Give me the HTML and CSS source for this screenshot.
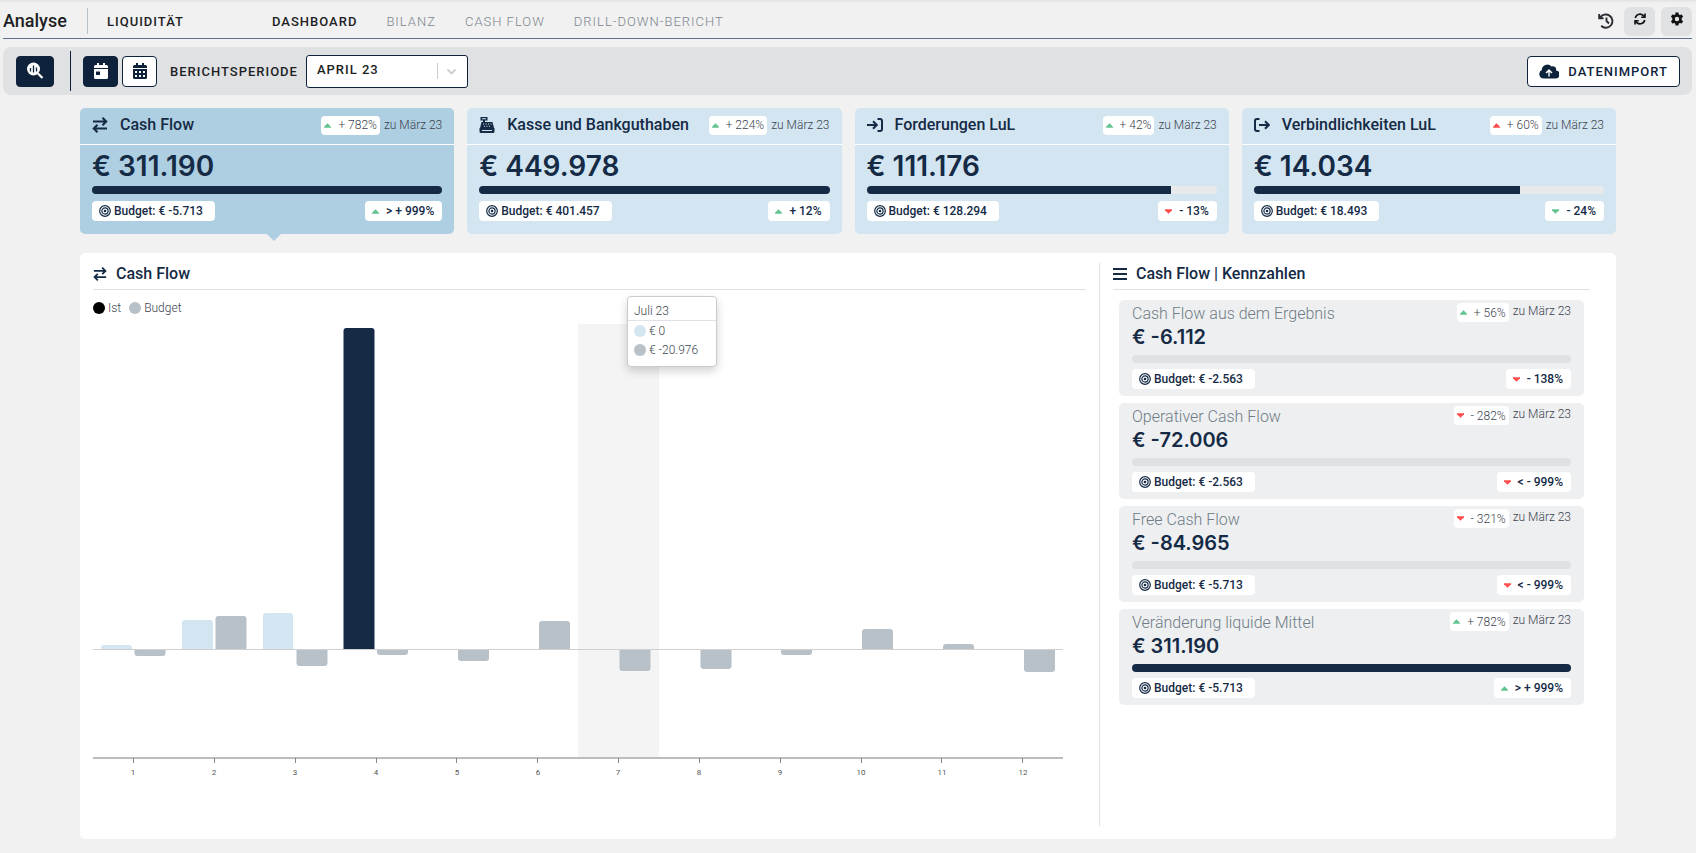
FILE: index.html
```html
<!DOCTYPE html>
<html lang="de">
<head>
<meta charset="utf-8">
<meta name="viewport" content="width=device-width, initial-scale=1">
<title>Analyse – Liquidität</title>
<link rel="stylesheet" href="styles.css">
</head>
<body>
<svg class="sprite" aria-hidden="true">
  <symbol id="swap" viewBox="0 0 16 16"><path d="M1 4.500h13M10.500 .800l3.700 3.700L10.500 8.200M15 11.500H2M5.500 7.800L1.800 11.500 5.500 15.200" fill="none" stroke="currentColor" stroke-width="2.100"/></symbol>
  <symbol id="register" viewBox="0 0 16 16"><path fill="currentColor" fill-rule="evenodd" d="M1.500 0h7v3.500H6V5h7.500l1.500 6H1l1.500-6H4V3.500H1.500zM3 1.300v1h4v-1zM4 6.500v1h1v-1zm2.500 0v1h1v-1zm2.500 0v1h1v-1zm2.500 0v1h1v-1zM5 8.700v1h1v-1zm2.500 0v1h1v-1zm2.500 0v1h1v-1zM.500 11h15v3.500q0 1.500-1.500 1.500H2Q.500 16 .500 14.500zM3 13v1h10v-1z"/></symbol>
  <symbol id="enter" viewBox="0 0 16 16"><path d="M0 8h9.500M6 4.200L9.800 8 6 11.800M10.500 2H13q2 0 2 2v8q0 2-2 2h-2.500" fill="none" stroke="currentColor" stroke-width="2"/></symbol>
  <symbol id="leave" viewBox="0 0 16 16"><path d="M5 8h9.500M11 4.200L14.800 8 11 11.800M5.500 2H3Q1 2 1 4v8q0 2 2 2h2.500" fill="none" stroke="currentColor" stroke-width="2"/></symbol>
  <symbol id="target" viewBox="0 0 12 12"><g fill="none" stroke="currentColor" stroke-width="1.200"><circle cx="6" cy="6" r="5.300"/><circle cx="6" cy="6" r="3.100"/></g><circle cx="6" cy="6" r="1.300" fill="currentColor"/></symbol>
  <symbol id="up" viewBox="0 0 8 5"><path d="M4 0l4 4v1H0V4z" fill="currentColor"/></symbol>
  <symbol id="down" viewBox="0 0 8 5"><path d="M4 5l4-4V0H0v1z" fill="currentColor"/></symbol>
  <symbol id="list" viewBox="0 0 14 14"><path d="M0 2h14M0 7h14M0 12h14" stroke="currentColor" stroke-width="2"/></symbol>
</svg>

<header class="topbar">
  <h1 class="brand">Analyse</h1>
  <span class="area">Liquidität</span>
  <nav class="tabs">
    <a class="tab tab-active" href="#dashboard">Dashboard</a>
    <a class="tab" href="#bilanz">Bilanz</a>
    <a class="tab" href="#cashflow">Cash Flow</a>
    <a class="tab" href="#bericht">Drill-Down-Bericht</a>
  </nav>
  <div class="tools">
    <button class="tool tool-plain" type="button" aria-label="Verlauf"><svg width="16" height="16" viewBox="0 0 16 16"><path d="M1.200 1v4.300h4.300M2 5a6.600 6.600 0 1 1 1.200 7.800M8.500 4.500V8l2.500 2.500" fill="none" stroke="currentColor" stroke-width="1.900"/></svg></button>
    <button class="tool" type="button" aria-label="Aktualisieren"><svg width="12" height="12" viewBox="0 0 12 12"><path d="M1.300 5A4.800 4.800 0 0 1 10 3.300M10.700 7A4.800 4.800 0 0 1 2 8.700M11 .500V4.200H7.300M1 11.500V7.800h3.700" fill="none" stroke="currentColor" stroke-width="1.600"/></svg></button>
    <button class="tool" type="button" aria-label="Einstellungen"><svg width="14" height="14" viewBox="0 0 14 14"><path fill="currentColor" fill-rule="evenodd" d="M5.600.500h2.800l.400 1.900 1.100.600 1.800-.600 1.400 2.400-1.400 1.300v1.800l1.400 1.300-1.400 2.400-1.800-.600-1.100.600-.400 1.900H5.600l-.400-1.900-1.100-.600-1.800.600L.900 9.200l1.400-1.300V6.100L.900 4.800l1.400-2.400 1.800.600 1.100-.600zM7 4.800a2.200 2.200 0 1 0 0 4.400 2.200 2.200 0 0 0 0-4.400z"/></svg></button>
  </div>
</header>

<section class="toolbar">
  <button class="btn btn-dark btn-wide" type="button" aria-label="Analyse suchen"><svg width="18" height="18" viewBox="0 0 18 18"><circle cx="7.500" cy="7" r="6.500" fill="currentColor"/><path d="M12 11.500l4.500 4.500" stroke="currentColor" stroke-width="2.200"/><path d="M4.500 6v3.500M7.500 3.500v7M10.500 5.500v4" stroke="#0f223b" stroke-width="1.300"/></svg></button>
  <div class="period">
    <button class="btn btn-dark" type="button" aria-label="Monat"><svg width="14" height="16" viewBox="0 0 14 16"><path fill="currentColor" fill-rule="evenodd" d="M3 0h2v2h4V0h2v2h1.500Q14 2 14 3.500V5H0V3.500Q0 2 1.500 2H3zM0 6h14v8.500q0 1.500-1.500 1.500h-11Q0 16 0 14.500zm2 2.500v3.500h4V8.500z"/></svg></button>
    <button class="btn" type="button" aria-label="Jahr"><svg width="14" height="16" viewBox="0 0 14 16"><path fill="currentColor" fill-rule="evenodd" d="M3 0h2v2h4V0h2v2h1.500Q14 2 14 3.500V5H0V3.500Q0 2 1.500 2H3zM0 6h14v8.500q0 1.500-1.500 1.500h-11Q0 16 0 14.500zm2 2v2h2V8zm4 0v2h2V8zm4 0v2h2V8zm-8 4v2h2v-2zm4 0v2h2v-2zm4 0v2h2v-2z"/></svg></button>
    <label class="period-label" for="period">Berichtsperiode</label>
    <span class="select-box">
      <select class="select" id="period"><option>April 23</option></select>
      <svg class="select-mark" width="24" height="16" viewBox="0 0 24 16"><path d="M.500 0v16" stroke="#ccc"/><path d="M10.500 6.500L14.500 10.500 18.500 6.500" fill="none" stroke="#ccc" stroke-width="1.800"/></svg>
    </span>
  </div>
  <button class="btn import" type="button"><svg width="20" height="15" viewBox="0 0 20 15"><path fill="currentColor" fill-rule="evenodd" d="M4.500 14.500A4.500 4.500 0 0 1 2.800 6 5.500 5.500 0 0 1 12.500 2.500 3.300 3.300 0 0 1 17 6.500a4 4 0 0 1-1 8zM10 5L6.500 8.500l1 1L9.300 8v4.500h1.400V8l1.800 1.500 1-1z"/></svg>Datenimport</button>
</section>

<main class="main">
  <section class="cards">
    <article class="card card-active">
      <header class="card-head"><svg class="icon"><use href="#swap"/></svg><h2 class="title">Cash Flow</h2><span class="pill trend"><svg class="arrow good"><use href="#up"/></svg>+ 782%</span><span class="since">zu März 23</span></header>
      <div class="card-body">
        <p class="amount">€ 311.190</p>
        <div class="bar"><div class="fill" style="width:100%"></div></div>
        <div class="row"><span class="pill budget"><svg class="target"><use href="#target"/></svg>Budget: € -5.713</span><span class="pill delta"><svg class="arrow good"><use href="#up"/></svg>&gt; + 999%</span></div>
      </div>
    </article>
    <article class="card">
      <header class="card-head"><svg class="icon"><use href="#register"/></svg><h2 class="title">Kasse und Bankguthaben</h2><span class="pill trend"><svg class="arrow good"><use href="#up"/></svg>+ 224%</span><span class="since">zu März 23</span></header>
      <div class="card-body">
        <p class="amount">€ 449.978</p>
        <div class="bar"><div class="fill" style="width:100%"></div></div>
        <div class="row"><span class="pill budget"><svg class="target"><use href="#target"/></svg>Budget: € 401.457</span><span class="pill delta"><svg class="arrow good"><use href="#up"/></svg>+ 12%</span></div>
      </div>
    </article>
    <article class="card">
      <header class="card-head"><svg class="icon"><use href="#enter"/></svg><h2 class="title">Forderungen LuL</h2><span class="pill trend"><svg class="arrow good"><use href="#up"/></svg>+ 42%</span><span class="since">zu März 23</span></header>
      <div class="card-body">
        <p class="amount">€ 111.176</p>
        <div class="bar"><div class="fill" style="width:87%"></div></div>
        <div class="row"><span class="pill budget"><svg class="target"><use href="#target"/></svg>Budget: € 128.294</span><span class="pill delta"><svg class="arrow bad"><use href="#down"/></svg>- 13%</span></div>
      </div>
    </article>
    <article class="card">
      <header class="card-head"><svg class="icon"><use href="#leave"/></svg><h2 class="title">Verbindlichkeiten LuL</h2><span class="pill trend"><svg class="arrow bad"><use href="#up"/></svg>+ 60%</span><span class="since">zu März 23</span></header>
      <div class="card-body">
        <p class="amount">€ 14.034</p>
        <div class="bar"><div class="fill" style="width:76%"></div></div>
        <div class="row"><span class="pill budget"><svg class="target"><use href="#target"/></svg>Budget: € 18.493</span><span class="pill delta"><svg class="arrow good"><use href="#down"/></svg>- 24%</span></div>
      </div>
    </article>
  </section>

  <section class="panel">
    <div class="chart-col">
      <header class="panel-head"><svg class="icon-small"><use href="#swap"/></svg><h2 class="title">Cash Flow</h2></header>
      <div class="legend"><span class="key"><i class="dot dot-black"></i>Ist</span><span class="key"><i class="dot dot-gray"></i>Budget</span></div>
      <div class="chart">
        <svg class="plot" viewBox="0 0 970 456" role="img" aria-label="Cash Flow je Monat, Ist und Budget">
          <rect x="485" y="0" width="81" height="433" fill="#f4f4f4"/>
          <g fill="#d3e5f1">
            <path d="M8 325v-1q0-3 3-3h25q3 0 3 3v1z"/>
            <path d="M89 325v-26q0-3 3-3h25q3 0 3 3v26z"/>
            <path d="M170 325v-33q0-3 3-3h24q3 0 3 3v33z"/>
          </g>
          <path d="M250.500 325V7q0-3 3-3h25q3 0 3 3v318z" fill="#142a45"/>
          <g fill="#b8c0c8">
            <path d="M41.500 325v4q0 3 3 3h25q3 0 3-3v-4z"/>
            <path d="M122.500 325v-30q0-3 3-3h25q3 0 3 3v30z"/>
            <path d="M203.500 325v14q0 3 3 3h25q3 0 3-3v-14z"/>
            <path d="M284 325v3q0 3 3 3h25q3 0 3-3v-3z"/>
            <path d="M365 325v9q0 3 3 3h25q3 0 3-3v-9z"/>
            <path d="M446 325v-25q0-3 3-3h25q3 0 3 3v25z"/>
            <path d="M526.500 325v19q0 3 3 3h25q3 0 3-3v-19z"/>
            <path d="M607.500 325v17q0 3 3 3h25q3 0 3-3v-17z"/>
            <path d="M688 325v3q0 3 3 3h25q3 0 3-3v-3z"/>
            <path d="M769 325v-17q0-3 3-3h25q3 0 3 3v17z"/>
            <path d="M850 325v-2q0-3 3-3h25q3 0 3 3v2z"/>
            <path d="M931 325v20q0 3 3 3h25q3 0 3-3v-20z"/>
          </g>
          <path d="M0 325.500h970" stroke="#d0d0d0"/>
          <path d="M0 434h970" stroke="#bdbdbd" stroke-width="2"/>
          <path d="M40.500 434v5M121.500 434v5M202.500 434v5M283.500 434v5M363.500 434v5M444.500 434v5M525.500 434v5M606.500 434v5M687.500 434v5M768.500 434v5M848.500 434v5M929.500 434v5" stroke="#888"/>
          <g class="axis-text">
            <text x="40" y="451">1</text><text x="121" y="451">2</text><text x="202" y="451">3</text><text x="283" y="451">4</text><text x="364" y="451">5</text><text x="445" y="451">6</text><text x="525" y="451">7</text><text x="606" y="451">8</text><text x="687" y="451">9</text><text x="768" y="451">10</text><text x="849" y="451">11</text><text x="930" y="451">12</text>
          </g>
        </svg>
        <div class="tooltip">
          <div class="tooltip-head">Juli 23</div>
          <div class="tooltip-row"><i class="dot dot-blue"></i>€ 0</div>
          <div class="tooltip-row"><i class="dot dot-gray"></i>€ -20.976</div>
        </div>
      </div>
    </div>
    <aside class="side">
      <header class="panel-head"><svg class="icon-small"><use href="#list"/></svg><h2 class="title">Cash Flow | Kennzahlen</h2></header>
      <div class="metrics">
        <article class="metric">
          <header class="metric-head"><h3 class="metric-title">Cash Flow aus dem Ergebnis</h3><span class="pill trend"><svg class="arrow good"><use href="#up"/></svg>+ 56%</span><span class="since">zu März 23</span></header>
          <p class="metric-amount">€ -6.112</p>
          <div class="bar bar-gray"></div>
          <div class="row"><span class="pill budget"><svg class="target"><use href="#target"/></svg>Budget: € -2.563</span><span class="pill delta"><svg class="arrow bad"><use href="#down"/></svg>- 138%</span></div>
        </article>
        <article class="metric">
          <header class="metric-head"><h3 class="metric-title">Operativer Cash Flow</h3><span class="pill trend"><svg class="arrow bad"><use href="#down"/></svg>- 282%</span><span class="since">zu März 23</span></header>
          <p class="metric-amount">€ -72.006</p>
          <div class="bar bar-gray"></div>
          <div class="row"><span class="pill budget"><svg class="target"><use href="#target"/></svg>Budget: € -2.563</span><span class="pill delta"><svg class="arrow bad"><use href="#down"/></svg>&lt; - 999%</span></div>
        </article>
        <article class="metric">
          <header class="metric-head"><h3 class="metric-title">Free Cash Flow</h3><span class="pill trend"><svg class="arrow bad"><use href="#down"/></svg>- 321%</span><span class="since">zu März 23</span></header>
          <p class="metric-amount">€ -84.965</p>
          <div class="bar bar-gray"></div>
          <div class="row"><span class="pill budget"><svg class="target"><use href="#target"/></svg>Budget: € -5.713</span><span class="pill delta"><svg class="arrow bad"><use href="#down"/></svg>&lt; - 999%</span></div>
        </article>
        <article class="metric">
          <header class="metric-head"><h3 class="metric-title">Veränderung liquide Mittel</h3><span class="pill trend"><svg class="arrow good"><use href="#up"/></svg>+ 782%</span><span class="since">zu März 23</span></header>
          <p class="metric-amount">€ 311.190</p>
          <div class="bar bar-gray"><div class="fill" style="width:100%"></div></div>
          <div class="row"><span class="pill budget"><svg class="target"><use href="#target"/></svg>Budget: € -5.713</span><span class="pill delta"><svg class="arrow good"><use href="#up"/></svg>&gt; + 999%</span></div>
        </article>
      </div>
    </aside>
  </section>
</main>
</body>
</html>
```

FILE: styles.css
```css
* { box-sizing: border-box; }
body {
  margin: 0;
  min-height: 100vh;
  display: flex;
  flex-direction: column;
  background: #f1f1f1;
  color: #142a45;
  font-family: Roboto, "Liberation Sans", sans-serif;
  font-size: 12px;
  box-shadow: inset 0 3px 3px -2px #dcdcdc;
}
h1, h2, h3, p { margin: 0; }
button, select { font: inherit; color: inherit; }
.sprite { position: absolute; width: 0; height: 0; }

/* top bar */
.topbar {
  display: flex;
  align-items: center;
  height: 39px;
  margin: 0 4px 0 3px;
  padding-top: 4px;
  border-bottom: 1px solid #5f7391;
  color: #1d1f24;
}
.brand { width: 85px; height: 26px; line-height: 26px; font-size: 18px; font-weight: 500; border-right: 1px solid #b8c0c8; }
.area { width: 165px; padding-left: 19px; }
.area, .tab, .period-label, .select, .import { font-size: 13px; font-weight: 500; letter-spacing: 1px; text-transform: uppercase; }
.tabs { display: flex; gap: 29px; margin-left: 19px; }
.tab { color: #7c8790; font-weight: 300; text-decoration: none; }
.tab-active { color: #1d1f24; font-weight: 500; }
.tools { display: flex; gap: 6px; margin-left: auto; }
.tool { display: grid; place-items: center; width: 31px; height: 29px; padding: 0 0 4px; border: 0; border-radius: 6px; background: #dfe1e3; color: #111; }
.tool-plain { width: 24px; padding: 0; background: none; color: #2a2d33; }

/* filter bar */
.toolbar {
  display: flex;
  align-items: center;
  height: 48px;
  margin: 8px 4px 0 3px;
  padding: 0 12px 0 13px;
  border-radius: 8px;
  background: #dfe1e3;
}
.btn { display: flex; align-items: center; justify-content: center; width: 35px; height: 31px; padding: 0; border: 1px solid #0f223b; border-radius: 4px; background: #fff; color: #0f223b; }
.btn-dark { background: #0f223b; color: #fff; }
.btn-wide { width: 38px; margin-right: 16px; }
.period { display: flex; align-items: center; gap: 4px; height: 40px; padding-left: 12px; border-left: 1px solid #0f223b; }
.period-label { margin: 0 4px 0 9px; color: #1d1f24; }
.select-box { display: grid; align-items: center; width: 162px; }
.select { grid-area: 1 / 1; appearance: none; height: 33px; padding: 0 10px 4px; border: 1px solid #0f223b; border-radius: 3px; background: #fff; color: #1d1f24; }
.select-mark { grid-area: 1 / 1; justify-self: end; margin-right: 7px; pointer-events: none; }
.import { width: auto; gap: 9px; margin-left: auto; padding: 0 11px; }

/* key figures */
.main { flex: 1; display: flex; flex-direction: column; gap: 19px; padding: 13px 80px 14px; }
.cards { display: grid; grid-template-columns: repeat(4, 1fr); gap: 13px; }
.card { position: relative; border-radius: 5px; background: #d3e5f1; }
.card-active { background: #aecee1; }
.card-active::after {
  content: "";
  position: absolute;
  top: 100%;
  left: 50%;
  border: 7px solid transparent;
  border-top-color: #aecee1;
  border-bottom: 0;
}
.card-head { display: flex; align-items: center; height: 37px; padding: 0 12px 2px; border-bottom: 1px solid #fff; }
.icon { width: 16px; height: 16px; margin-right: 12px; }
.title { font-size: 16px; line-height: 20px; font-weight: 500; white-space: nowrap; }
.pill { display: inline-flex; align-items: center; height: 20px; border-radius: 4px; background: #fff; white-space: nowrap; }
.trend { height: 19px; margin-left: auto; padding: 0 3px; }
.since { margin-left: 4px; white-space: nowrap; }
.trend, .since { color: #3d4450; font-weight: 300; }
.budget, .delta { font-weight: 500; }
.budget { padding: 0 12px 0 7px; }
.delta { padding: 0 8px 0 7px; }
.arrow { width: 7px; height: 5px; margin-right: 7px; }
.target { width: 12px; height: 12px; margin-right: 3px; }
.good { color: #63c490; }
.bad { color: #ff4d4d; }
.card-body { padding: 5px 12px 13px; }
.amount, .metric-amount { font-family: Inter, Roboto, sans-serif; font-weight: 600; }
.amount { font-size: 28px; line-height: 32px; }
.bar { height: 8px; margin: 4px 0 7px; border-radius: 4px; background: #e7e9eb; overflow: hidden; }
.bar-gray { background: #dfe1e3; }
.fill { height: 100%; background: #142a45; }
.row { display: flex; justify-content: space-between; }

/* chart and metrics */
.panel { flex: 1; display: grid; grid-template-columns: 1019fr 517fr; padding: 10px 0 13px; border-radius: 5px; background: #fff; }
.chart-col { padding: 0 13px; }
.side { padding: 0 26px 0 13px; border-left: 1px solid #dfe1e6; }
.panel-head { display: flex; align-items: center; gap: 9px; height: 27px; padding-bottom: 4px; border-bottom: 1px solid #dfe1e6; }
.icon-small { width: 14px; height: 16px; }
.legend { display: flex; gap: 8px; margin: 10px 0 9px; color: #3d4450; font-weight: 300; }
.key { display: flex; align-items: center; gap: 3px; height: 15px; }
.dot { display: inline-block; flex: none; width: 12px; height: 12px; border-radius: 50%; }
.dot-black { background: #000; }
.dot-gray { background: #b8c0c8; }
.dot-blue { background: #d3e5f1; }
.chart { position: relative; padding-right: 23px; }
.plot { display: block; width: 100%; height: auto; }
.axis-text { font-size: 8px; fill: #555; text-anchor: middle; }
.tooltip {
  position: absolute;
  top: -28px;
  left: 534px;
  width: 90px;
  padding: 5px 0 7px;
  border: 1px solid #ccc;
  border-radius: 4px;
  background: #fff;
  box-shadow: 0 4px 10px #0000002e;
  color: #3d4450;
  font-weight: 300;
}
.tooltip-head { padding: 0 6px; line-height: 18px; border-bottom: 1px solid #dfe1e6; }
.tooltip-row { display: flex; align-items: center; gap: 3px; height: 19px; padding: 0 6px; }
.metrics { display: grid; gap: 7px; padding: 10px 6px; }
.metric { padding: 3px 13px 7px; border-radius: 5px; background: #eeeff1; }
.metric-head { display: flex; align-items: flex-start; height: 21px; }
.metric-head .since { line-height: 17px; }
.metric-title { color: #6f7c85; font-size: 16px; line-height: 22px; font-weight: 300; }
.metric-amount { font-size: 20px; line-height: 26px; }
.metric .bar { margin: 5px 0 6px; }
```
